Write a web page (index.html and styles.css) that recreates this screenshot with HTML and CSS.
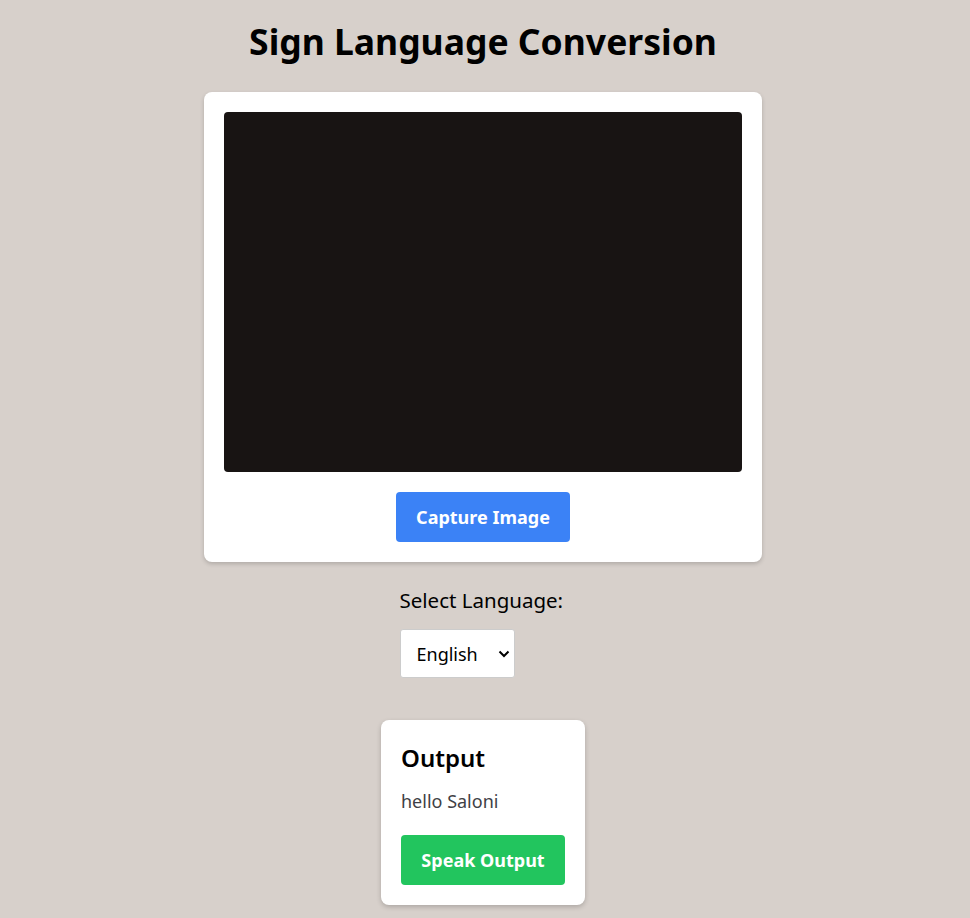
FILE: index.html
```html
<!DOCTYPE html>
<html>
<head>
<meta charset="utf-8">
<link rel="stylesheet" href="styles.css">
</head>
<body>
<main class="page">
  <h1 class="title">Sign Language Conversion</h1>
  <section class="camera-card">
    <div class="video"></div>
    <button class="btn btn-blue">Capture Image</button>
  </section>
  <div class="lang">
    <label class="lang-label">Select Language:</label>
    <div class="select">
      <span>English</span>
      <svg width="12" height="8" viewBox="0 0 12 8"><path d="M1.5 1.5 L6 6 L10.5 1.5" fill="none" stroke="#000" stroke-width="2"/></svg>
    </div>
  </div>
  <section class="output-card">
    <h2 class="output-title">Output</h2>
    <p class="output-text">hello Saloni</p>
    <button class="btn btn-green">Speak Output</button>
  </section>
</main>
</body>
</html>
```
FILE: styles.css
```css
* { box-sizing: border-box; }
html, body { margin: 0; padding: 0; }
body {
  background: #d7d0cb;
  font-family: "Noto Sans", "Open Sans", sans-serif;
  color: #000;
}
.page {
  display: flex;
  flex-direction: column;
  align-items: center;
  padding: 16px 4px 12px 0;
}
.title {
  margin: 0;
  font-size: 35.5px;
  line-height: 50px;
  font-weight: 700;
}
.camera-card {
  margin-top: 26px;
  width: 558px;
  background: #fff;
  border-radius: 8px;
  padding: 20px;
  box-shadow: 0 2px 4px rgba(0,0,0,0.18);
  display: flex;
  flex-direction: column;
  align-items: center;
}
.video {
  width: 518px;
  height: 360px;
  background: #181413;
  border-radius: 4px;
}
.btn {
  border: none;
  border-radius: 4px;
  color: #fff;
  font-family: inherit;
  font-size: 18px;
  font-weight: 700;
  height: 50px;
  padding: 0 20px;
}
.btn-blue {
  margin-top: 20px;
  width: 174px;
  background: #3b82f6;
}
.lang {
  margin-top: 24px;
  width: 167px;
  display: flex;
  flex-direction: column;
  align-items: flex-start;
}
.lang-label {
  font-size: 20.5px;
  line-height: 28px;
  white-space: nowrap;
}
.select {
  margin-top: 15px;
  width: 115px;
  height: 49px;
  background: #fff;
  border: 1px solid #ccc;
  border-radius: 3px;
  display: flex;
  align-items: center;
  justify-content: space-between;
  padding: 0 4px 0 16px;
  font-size: 18px;
}
.output-card {
  margin-top: 42px;
  width: 204px;
  background: #fff;
  border-radius: 8px;
  padding: 20px;
  box-shadow: 0 2px 5px rgba(0,0,0,0.2);
}
.output-title {
  margin: 0;
  font-size: 24px;
  line-height: 36px;
  font-weight: 600;
}
.output-text {
  margin: 11px 0 0;
  font-size: 18px;
  line-height: 28px;
  color: #3f3f46;
}
.btn-green {
  margin-top: 20px;
  width: 164px;
  background: #22c55e;
  display: block;
}
```
